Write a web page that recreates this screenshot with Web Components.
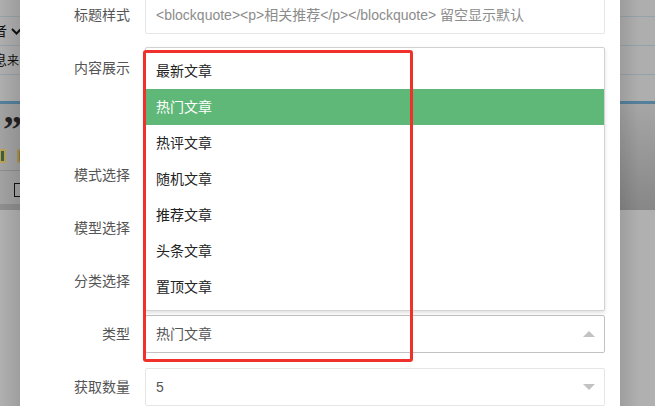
<!DOCTYPE html>
<html>
<head>
<meta charset="utf-8">
<title>内容展示</title>
<style>
  html, body { margin: 0; height: 100%; overflow: hidden; }
  body { font: 14px "Liberation Sans", "Noto Sans CJK SC", sans-serif; color: #555; }
</style>
</head>
<body>
<template id="backdrop-template">
  <style>
    :host { display: block; position: relative; width: 655px; height: 406px; overflow: hidden; background: #a9a9a9; }
    .page { position: absolute; left: 0; top: 0; bottom: 0; width: 100%; display: flex; justify-content: space-between; }
    .side { position: relative; height: 100%; display: flex; flex-direction: column; overflow: hidden; }
    .left { width: 20px; color: #111; }
    .right { width: 35px; }
    .side::after { content: ''; position: absolute; inset: 0; }
    .left::after { background: linear-gradient(90deg, rgba(0,0,0,0), rgba(0,0,0,.1)); }
    .right::after { background: linear-gradient(90deg, rgba(0,0,0,.1), rgba(0,0,0,0) 55%); }
    .band { flex: none; box-sizing: border-box; overflow: hidden; white-space: nowrap; background: #aeaeae; }
    .b1 { height: 16px; }
    .b2 { height: 29px; border-top: 1px solid #94a3a9; line-height: 28px; display: flex; align-items: center; }
    .b3 { height: 29px; border-top: 1px solid #94a3a9; line-height: 28px; }
    .b4 { height: 27px; border-top: 1px solid #94a3a9; }
    .b5 { height: 3px; background: #55809c; }
    .b6 { height: 106px; background: linear-gradient(180deg, #a6a6a6, #878787); }
    .left .b6 { height: 106px; background: #a2a2a2; position: relative; }
    .b8 { flex: 1; background: #b0b0b0; }
    .sel { margin-left: -7px; font-size: 14px; flex: none; }
    .small { font-size: 12px; }
    svg { flex: none; margin-left: 4px; }
    .quote { position: absolute; left: 3px; top: 1px; font: bold 38px/48px "Liberation Serif", serif; color: #222; }
    .chip { position: absolute; left: -1px; top: 45px; width: 7px; height: 14px; box-sizing: border-box; border: 2px solid #b8a25a; background: #3d5f3d; }
    .chip.two { left: 17px; width: 6px; background: #8f7a3c; border-color: #a89254; border-radius: 2px; }
    .line { position: absolute; left: 0; right: 0; height: 1px; background: #8d8d8d; }
    .box { position: absolute; left: 14px; top: 79px; width: 14px; height: 14px; box-sizing: border-box; border: 1px solid #111; }
    .foot { position: absolute; left: 0; right: 0; top: 100px; height: 6px; background: #8e8e8e; }
    ::slotted(*) { position: absolute; }
  </style>
  <div class="page">
    <div class="side left">
      <div class="band b1"></div>
      <div class="band b2"><span class="sel">者</span><svg width="11" height="7" viewBox="0 0 11 7"><path d="M1 1l4.500 4.500L10 1" fill="none" stroke="#111" stroke-width="2"/></svg></div>
      <div class="band b3"><span class="sel">息<span class="small">来</span></span></div>
      <div class="band b4"></div>
      <div class="band b5"></div>
      <div class="band b6">
        <span class="quote">”</span>
        <span class="chip"></span>
        <span class="chip two"></span>
        <span class="line" style="top:66px"></span>
        <span class="box"></span>
        <span class="foot"></span>
      </div>
      <div class="band b8"></div>
    </div>
    <div class="side right">
      <div class="band b1"></div>
      <div class="band b2"></div>
      <div class="band b3"></div>
      <div class="band b4"></div>
      <div class="band b5"></div>
      <div class="band b6"></div>
      <div class="band b8"></div>
    </div>
  </div>
  <slot></slot>
</template>

<template id="dialog-template">
  <style>
    :host { display: block; position: absolute; left: 20px; top: -4px; width: 600px; height: 420px; background: #fff; }
    .form { display: flex; flex-direction: column; }
  </style>
  <div class="form"><slot></slot></div>
</template>

<template id="field-template">
  <style>
    :host { display: grid; grid-template-columns: 110px 460px; column-gap: 15px; height: var(--row, 53px); color: #555; font-size: 14px; flex: none; }
    label { text-align: right; line-height: 38px; white-space: nowrap; }
    .control { min-width: 0; }
  </style>
  <label><slot name="label"></slot></label>
  <div class="control"><slot></slot></div>
</template>

<template id="text-input-template">
  <style>
    :host { display: block; box-sizing: border-box; height: 38px; border: 1px solid #e6e6e6; border-radius: 2px; background: #fff; padding: 0 10px; line-height: 36px; font-size: 14px; color: #8c8c8c; white-space: nowrap; overflow: hidden; }
  </style>
  <slot></slot>
</template>

<template id="select-box-template">
  <style>
    :host { display: block; position: relative; box-sizing: border-box; height: 38px; border: 1px solid #e6e6e6; border-radius: 2px; background: #fff; padding: 0 10px; line-height: 36px; font-size: 14px; color: #555; }
    :host([open]) { border-color: #c2c2c2; }
    .arrow { position: absolute; right: 9px; top: 15px; width: 0; height: 0; border: 6px solid transparent; border-top-color: #c2c2c2; border-bottom: 0; }
    :host([open]) .arrow { border-top: 0; border-bottom: 6px solid #c2c2c2; }
  </style>
  <slot></slot>
  <span class="arrow"></span>
</template>

<template id="option-menu-template">
  <style>
    :host { display: block; position: absolute; left: 145px; top: 47px; width: 460px; height: 264px; box-sizing: border-box; padding: 5px 0; background: #fff; border: 1px solid #d2d2d2; border-radius: 2px; box-shadow: 0 2px 4px rgba(0,0,0,.12); }
  </style>
  <slot></slot>
</template>

<template id="option-item-template">
  <style>
    :host { display: block; height: 36px; line-height: 36px; padding: 0 10px; font-size: 14px; color: #222; white-space: nowrap; }
    :host([selected]) { background: #5fb878; color: #fff; }
  </style>
  <slot></slot>
</template>

<template id="highlight-box-template">
  <style>
    :host { display: block; position: absolute; left: 143px; top: 50px; width: 270px; height: 312px; box-sizing: border-box; border: 3px solid #f0302a; border-radius: 3px; pointer-events: none; }
  </style>
</template>

<page-backdrop>
  <modal-dialog>
    <form-field><span slot="label">标题样式</span><text-input>&lt;blockquote&gt;&lt;p&gt;相关推荐&lt;/p&gt;&lt;/blockquote&gt; 留空显示默认</text-input></form-field>
    <form-field style="--row:107px"><span slot="label">内容展示</span></form-field>
    <form-field><span slot="label">模式选择</span></form-field>
    <form-field><span slot="label">模型选择</span></form-field>
    <form-field><span slot="label">分类选择</span></form-field>
    <form-field><span slot="label">类型</span><select-box open>热门文章</select-box></form-field>
    <form-field><span slot="label">获取数量</span><select-box>5</select-box></form-field>
  </modal-dialog>
  <option-menu>
    <option-item>最新文章</option-item>
    <option-item selected>热门文章</option-item>
    <option-item>热评文章</option-item>
    <option-item>随机文章</option-item>
    <option-item>推荐文章</option-item>
    <option-item>头条文章</option-item>
    <option-item>置顶文章</option-item>
  </option-menu>
  <highlight-box></highlight-box>
</page-backdrop>

<script>
  /**
   * Registers a custom element that clones its template into an open shadow root.
   *
   * @param {string} name - The custom element name.
   * @param {string} templateId - The id of the template to clone.
   */
  function register (name, templateId) {
    const template = document.getElementById(templateId)
    customElements.define(name, class extends HTMLElement {
      constructor () {
        super()
        this.attachShadow({ mode: 'open' })
        this.shadowRoot.appendChild(template.content.cloneNode(true))
      }
    })
  }

  register('page-backdrop', 'backdrop-template')
  register('modal-dialog', 'dialog-template')
  register('form-field', 'field-template')
  register('text-input', 'text-input-template')
  register('select-box', 'select-box-template')
  register('option-menu', 'option-menu-template')
  register('option-item', 'option-item-template')
  register('highlight-box', 'highlight-box-template')
</script>
</body>
</html>
